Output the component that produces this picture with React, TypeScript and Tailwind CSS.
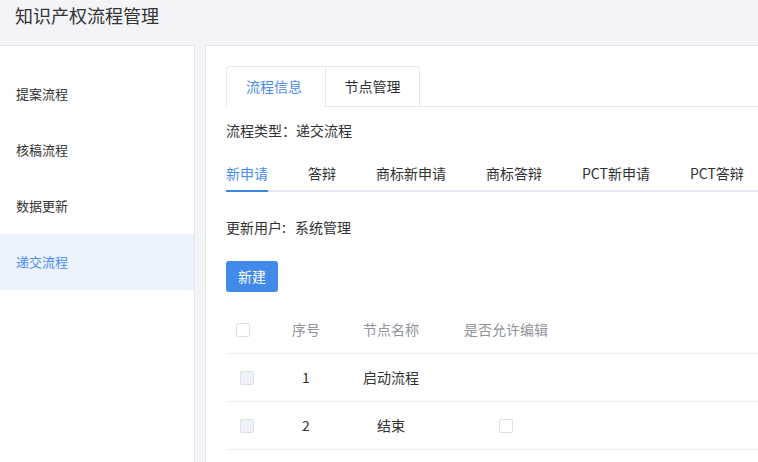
import React from "react";

const menu = ["提案流程", "核稿流程", "数据更新", "递交流程"];
const subTabs = ["新申请", "答辩", "商标新申请", "商标答辩", "PCT新申请", "PCT答辩"];

const rows = [
  { no: 1, name: "启动流程", editable: false },
  { no: 2, name: "结束", editable: true },
];

export default function App() {
  return (
    <div
      className="w-[758px] h-[462px] overflow-hidden bg-[#f3f4f8] text-[#303133]"
      style={{ fontFamily: '"Noto Sans CJK SC", "Noto Sans", sans-serif' }}
    >
      <div className="h-[45px] pl-[15px] pt-[3px] text-[18px] leading-[24px] text-[#333]">
        知识产权流程管理
      </div>

      <div className="flex gap-[10px] h-[417px]">
        {/* sidebar */}
        <div className="w-[195px] shrink-0 bg-white border-t border-r border-[#e4e6ec] pt-[20px]">
          {menu.map((m, i) => (
            <div
              key={m}
              className={`h-[56px] pl-4 pb-px flex items-center text-[13px] ${
                i === 3 ? "bg-[#ecf3fd] text-[#4a8bee]" : "text-[#333]"
              }`}
            >
              {m}
            </div>
          ))}
        </div>

        {/* main */}
        <div className="flex-1 bg-white border-t border-l border-[#e4e6ec] pl-[20px] pt-[20px] text-[14px]">
          <div className="flex border-b border-[#e4e7ed]">
            <div className="flex border border-b-0 border-[#e4e7ed] rounded-t-[4px] -mb-px">
              <div className="w-[98px] h-[40px] pr-[4px] flex items-center justify-center text-[#4a8bee] border-b border-white">
                流程信息
              </div>
              <div className="w-[94px] h-[40px] flex items-center justify-center border-l border-b border-[#e4e7ed]">
                节点管理
              </div>
            </div>
          </div>

          <div className="mt-[14px] leading-[18px]">流程类型：递交流程</div>

          <div className="mt-[20px] flex gap-[40px] border-b-2 border-[#e4e7ed]">
            {subTabs.map((t, i) => (
              <div
                key={t}
                className={`pt-[5px] pb-[8px] leading-[18px] whitespace-nowrap ${
                  i === 0 ? "text-[#4a8bee] border-b-2 border-[#3e86e6] -mb-[2px]" : ""
                }`}
              >
                {t}
              </div>
            ))}
          </div>

          <div className="mt-[26px] flex leading-[18px]">
            <span className="w-[69px]">更新用户:</span>
            <span>系统管理</span>
          </div>

          <button className="mt-[25px] h-[31px] w-[52px] rounded-[3px] bg-[#418aea] text-white text-[14px] flex items-center justify-center">
            新建
          </button>

          <div className="mt-[14px]">
            <div className="flex items-center h-[48px] border-b border-[#ebeef5] text-[#909399]">
              <div className="w-[50px] pl-[10px]">
                <div className="w-[14px] h-[14px] border border-[#dcdfe6] rounded-[2px] bg-white" />
              </div>
              <div className="w-[60px] text-center">序号</div>
              <div className="w-[110px] text-center">节点名称</div>
              <div className="w-[120px] text-center">是否允许编辑</div>
            </div>
            {rows.map((r) => (
              <div key={r.no} className="flex items-center h-[48px] border-b border-[#ebeef5]">
                <div className="w-[50px] pl-[14px]">
                  <div className="w-[14px] h-[14px] border border-[#dcdfe6] rounded-[2px] bg-[#edf2fc]" />
                </div>
                <div className="w-[60px] text-center">{r.no}</div>
                <div className="w-[110px] text-center">{r.name}</div>
                <div className="w-[120px] flex justify-center">
                  {r.editable && (
                    <div className="w-[14px] h-[14px] border border-[#dcdfe6] rounded-[2px] bg-white" />
                  )}
                </div>
              </div>
            ))}
          </div>
        </div>
      </div>
    </div>
  );
}
